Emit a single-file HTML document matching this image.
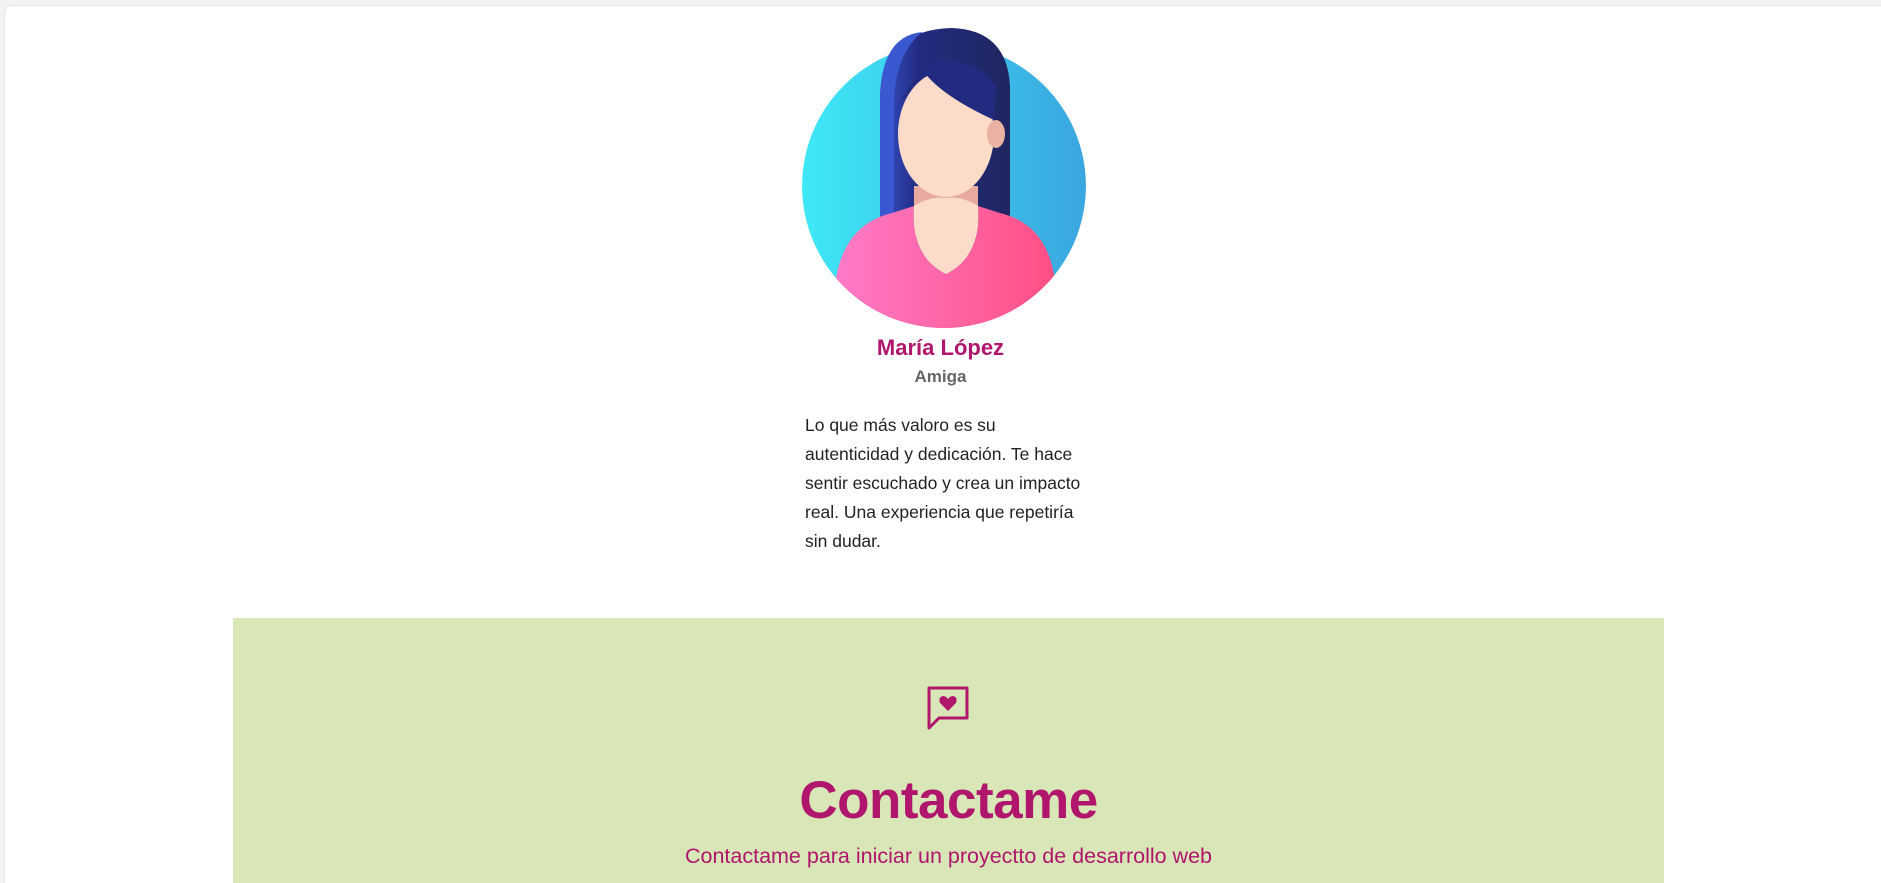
<!DOCTYPE html>
<html><head><meta charset="utf-8"><style>
html,body{margin:0;padding:0;background:#f3f3f3;width:1881px;height:883px;overflow:hidden;font-family:"Segoe UI","Liberation Sans",sans-serif}
.wrap{position:relative;width:1881px;height:883px;overflow:hidden}
.card{position:absolute;left:4px;top:5px;width:1877px;height:878px;background:#fff;border:1px solid #e6e6e6;border-bottom:none;border-right:none;border-radius:8px 0 0 0;box-sizing:border-box}
.av{position:absolute;left:802px;top:26px}
.name{position:absolute;left:0;width:1881px;top:335px;text-align:center;color:#b0166b;font-size:22px;font-weight:600}
.role{position:absolute;left:0;width:1881px;top:367px;text-align:center;color:#666;font-size:17px;font-weight:bold}
.txt{position:absolute;left:805px;top:411px;width:286px;font-size:17.5px;line-height:29px;color:#222}
.green{position:absolute;left:233px;top:618px;width:1431px;height:265px;background:#d8e6b8;overflow:hidden}
.h{position:absolute;left:0;width:1431px;top:152px;text-align:center;color:#b0166b;font-size:53px;font-weight:bold;letter-spacing:-0.5px}
.s{position:absolute;left:0;width:1431px;top:226px;text-align:center;color:#b0166b;font-size:21.5px;font-weight:300}
</style></head><body><div class="wrap">
<div class="card"></div>
<svg class="av" width="284" height="305" viewBox="0 0 284 305">
<defs>
<linearGradient id="bg" x1="0" x2="1"><stop offset="0" stop-color="#3fe8f6"/><stop offset="1" stop-color="#3aa6e0"/></linearGradient>
<linearGradient id="sh" x1="0" x2="1"><stop offset="0" stop-color="#ff7bc8"/><stop offset="1" stop-color="#ff4f84"/></linearGradient>
<linearGradient id="hr" x1="0" x2="1"><stop offset="0" stop-color="#3550c8"/><stop offset="0.3" stop-color="#232b80"/><stop offset="1" stop-color="#1f2660"/></linearGradient>
<clipPath id="c"><circle cx="142" cy="160" r="142"/><rect x="70" y="0" width="150" height="160"/></clipPath>
</defs>
<g clip-path="url(#c)">
<circle cx="142" cy="160" r="142" fill="url(#bg)"/>
<path d="M78 230 L78 70 Q80 4 150 2 Q205 4 208 60 L208 230 Z" fill="url(#hr)"/>
<path d="M78 230 L78 70 Q80 10 120 6 Q92 30 92 80 L92 230Z" fill="#3a58d0"/>
<path d="M112 160 h64 v50 h-64z" fill="#e6aaa0"/>
<ellipse cx="144" cy="108" rx="48" ry="63" fill="#fcdcc8"/>
<path d="M96 80 Q108 56 122 46 Q140 70 192 94 L194 60 Q170 28 130 36Z" fill="#232b80"/>
<ellipse cx="194" cy="108" rx="9" ry="14" fill="#eab2a0"/>
<path d="M32 270 Q36 200 90 187 L112 180 Q108 230 144 248 Q180 230 176 180 L198 187 Q252 200 254 270 L254 320 H32Z" fill="url(#sh)"/>
<path d="M112 180 Q108 230 144 248 Q180 230 176 180 Q160 170 144 172 Q128 170 112 180Z" fill="#fcdcc8"/>
</g>
</svg>
<div class="name">María López</div>
<div class="role">Amiga</div>
<div class="txt">Lo que más valoro es su autenticidad y dedicación. Te hace sentir escuchado y crea un impacto real. Una experiencia que repetiría sin dudar.</div>
<div class="green">
<svg style="position:absolute;left:692px;top:66px" width="46" height="46" viewBox="0 0 46 46"><path d="M4 4 H42 V34 H14 L4 44 Z" fill="none" stroke="#b0166b" stroke-width="3" stroke-linejoin="round"/><path d="M23 27 L15 19 Q13 13 18 12 Q21 12 23 15 Q25 12 28 12 Q33 13 31 19Z" fill="#b0166b"/></svg>
<div class="h">Contactame</div>
<div class="s">Contactame para iniciar un proyectto de desarrollo web</div>
</div>
</div></body></html>
